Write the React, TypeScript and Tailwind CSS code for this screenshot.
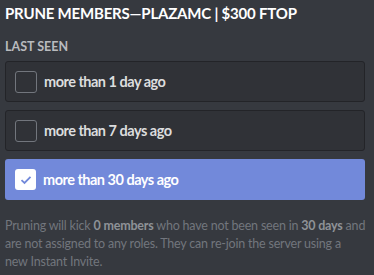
import React from "react";

const rows = [
  { label: "more than 1 day ago", checked: false },
  { label: "more than 7 days ago", checked: false },
  { label: "more than 30 days ago", checked: true },
];

export default function App() {
  return (
    <div
      className="w-[374px] h-[275px] bg-[#36393f] px-[5px] pt-[4px] overflow-hidden"
      style={{ fontFamily: 'Lato, "Open Sans", sans-serif' }}
    >
      <div className="text-[15px] leading-[18px] font-bold text-[#ffffff] uppercase tracking-[-0.2px]">
        PRUNE MEMBERS—PLAZAMC | $300 FTOP
      </div>
      <div className="mt-[18px] text-[12.5px] leading-[14px] font-bold text-[#b9bbbe] uppercase">
        Last Seen
      </div>
      <div className="mt-[7px] flex flex-col gap-[8px] w-[360px]">
        {rows.map((r) => (
          <div
            key={r.label}
            className={
              r.checked
                ? "h-[41px] rounded-[3px] bg-[#7289da] flex items-center pl-[10px] gap-[7px]"
                : "h-[41px] rounded-[3px] bg-[#303237] border border-[#232428] flex items-center pl-[9px] gap-[7px]"
            }
          >
            {r.checked ? (
              <div className="w-[21px] h-[21px] rounded-[3px] bg-white flex items-center justify-center">
                <svg width="12" height="10" viewBox="0 0 12 10">
                  <path d="M1.5 5.2 L4.5 8 L10.5 1.8" fill="none" stroke="#7289da" strokeWidth="1.8" />
                </svg>
              </div>
            ) : (
              <div className="w-[22px] h-[22px] rounded-[3px] border border-[#72767d]" />
            )}
            <span
              className={
                r.checked
                  ? "text-[14.5px] font-bold text-white tracking-[-0.5px]"
                  : "text-[14.5px] font-bold text-[#dcddde] tracking-[-0.5px]"
              }
            >
              {r.label}
            </span>
          </div>
        ))}
      </div>
      <p className="mt-[17px] text-[12.5px] leading-[18px] text-[#72767d] tracking-[-0.2px] whitespace-nowrap">
        Pruning will kick <span className="font-bold text-[#8e9297]">0 members</span> who have not been seen in{" "}
        <span className="font-bold text-[#8e9297]">30 days</span> and
        <br />
        are not assigned to any roles. They can re-join the server using a
        <br />
        new Instant Invite.
      </p>
    </div>
  );
}
